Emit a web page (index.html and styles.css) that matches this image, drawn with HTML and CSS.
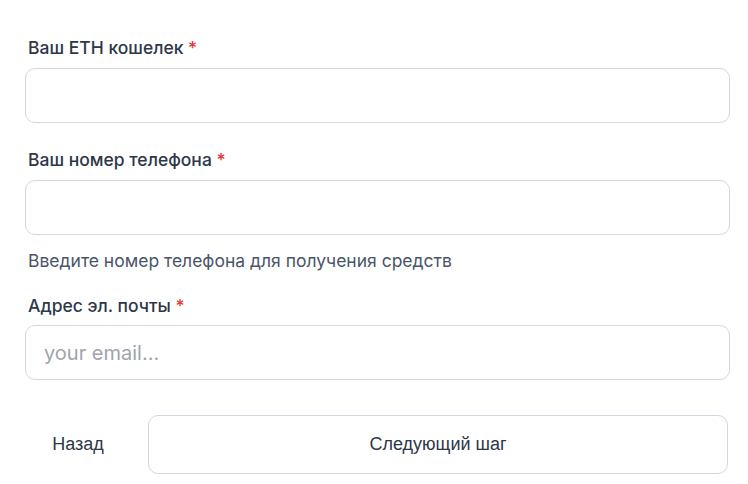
FILE: index.html
```html
<!DOCTYPE html>
<html lang="ru">
<head>
<meta charset="utf-8">
<link rel="stylesheet" href="styles.css">
</head>
<body>
<form class="form">
  <div class="field">
    <label class="label">Ваш ETH кошелек <span class="req">*</span></label>
    <input class="input" type="text">
  </div>
  <div class="field">
    <label class="label">Ваш номер телефона <span class="req">*</span></label>
    <input class="input" type="text">
    <p class="help">Введите номер телефона для получения средств</p>
  </div>
  <div class="field field-last">
    <label class="label label-tight">Адрес эл. почты <span class="req">*</span></label>
    <input class="input" type="email" placeholder="your email...">
  </div>
  <div class="actions">
    <button type="button" class="btn-back">Назад</button>
    <button type="button" class="btn-next">Следующий шаг</button>
  </div>
</form>
</body>
</html>
```
FILE: styles.css
```css
* { box-sizing: border-box; }
html, body { margin: 0; padding: 0; background: #fff; }
body { font-family: Inter, "Noto Sans", sans-serif; color: #2d3748; }
.form {
  padding: 36px 18px 0 25px;
  display: flex;
  flex-direction: column;
}
.field { display: flex; flex-direction: column; margin-bottom: 25px; }
.field-last { margin-bottom: 35px; }
.label {
  display: block;
  font-size: 17.5px;
  font-weight: 500;
  line-height: 24px;
  margin: 0 0 8px 3px;
  color: #2d3748;
}
.label-tight { margin-bottom: 7px; }
.req { color: #e3342f; }
.input {
  display: block;
  width: 705px;
  height: 55px;
  border: 1px solid #d4d6e2;
  border-radius: 10px;
  padding: 0 18px;
  font-family: Inter, "Noto Sans", sans-serif;
  font-size: 20px;
  color: #2d3748;
  background: #fff;
  outline: none;
}
.input::placeholder { color: #a0a4ad; }
.help {
  margin: 14px 0 -4px 3px;
  font-size: 17.5px;
  line-height: 24px;
  color: #4a5568;
}
.actions { display: flex; align-items: center; gap: 17px; }
.btn-back {
  width: 106px;
  height: 59px;
  border: none;
  background: transparent;
  font-family: "Liberation Sans", Arial, sans-serif;
  font-size: 18px;
  color: #2d3748;
  padding: 0;
  cursor: pointer;
}
.btn-next {
  width: 580px;
  height: 59px;
  border: 1px solid #d4d6e2;
  border-radius: 10px;
  background: #fff;
  font-family: "Liberation Sans", Arial, sans-serif;
  font-size: 18px;
  color: #2d3748;
  cursor: pointer;
}
```
